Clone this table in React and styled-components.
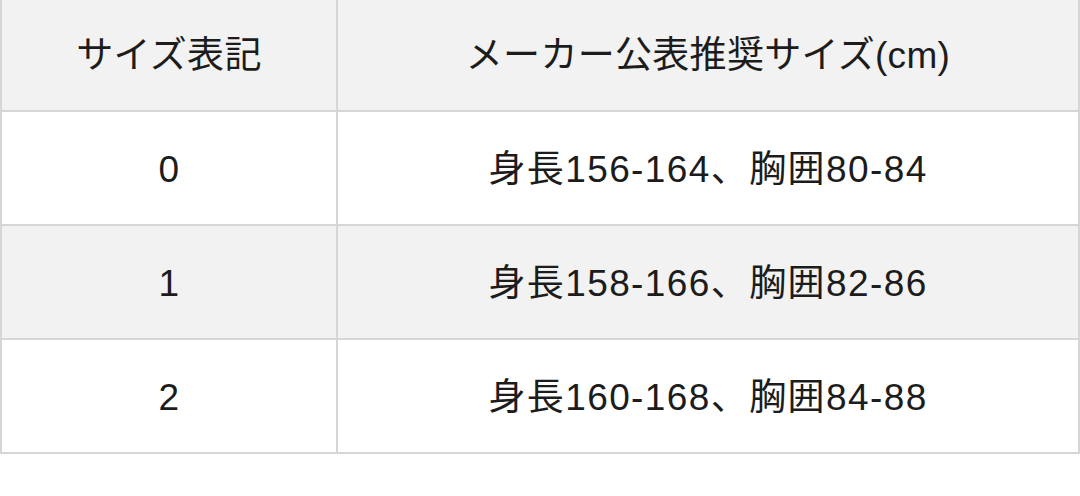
import React from "react";
import styled, { createGlobalStyle } from "styled-components";

const GlobalStyle = createGlobalStyle`
  html, body {
    margin: 0;
    padding: 0;
    background: #fff;
  }
  body {
    font-family: "Liberation Sans", "Noto Sans CJK JP", sans-serif;
    color: #1c1c1c;
  }
`;

const Table = styled.div`
  display: grid;
  grid-template-columns: 338px 1fr;
  width: 1080px;
  box-sizing: border-box;
`;

const Cell = styled.div`
  display: flex;
  align-items: center;
  justify-content: center;
  box-sizing: border-box;
  height: ${(p) => (p.$head ? 112 : 114)}px;
  background: ${(p) => (p.$shade ? "#f2f2f2" : "#fff")};
  border-bottom: 2px solid #d6d6d6;
  border-right: 2px solid #d6d6d6;
  border-left: ${(p) => (p.$first ? "2px solid #d6d6d6" : "none")};
  font-size: 37px;
  line-height: 1;
  letter-spacing: ${(p) => (p.$wide ? 1.4 : 0.3)}px;
  padding-top: ${(p) => (p.$head ? 0 : 2)}px;
`;

const rows = [
  { size: "0", spec: "身長156-164、胸囲80-84" },
  { size: "1", spec: "身長158-166、胸囲82-86" },
  { size: "2", spec: "身長160-168、胸囲84-88" },
];

export default function App() {
  return (
    <>
      <GlobalStyle />
      <Table>
        <Cell $head $shade $first>サイズ表記</Cell>
        <Cell $head $shade>メーカー公表推奨サイズ(cm)</Cell>
        {rows.map((r, i) => (
          <React.Fragment key={r.size}>
            <Cell $first $shade={i % 2 === 1}>{r.size}</Cell>
            <Cell $wide $shade={i % 2 === 1}>{r.spec}</Cell>
          </React.Fragment>
        ))}
      </Table>
    </>
  );
}
